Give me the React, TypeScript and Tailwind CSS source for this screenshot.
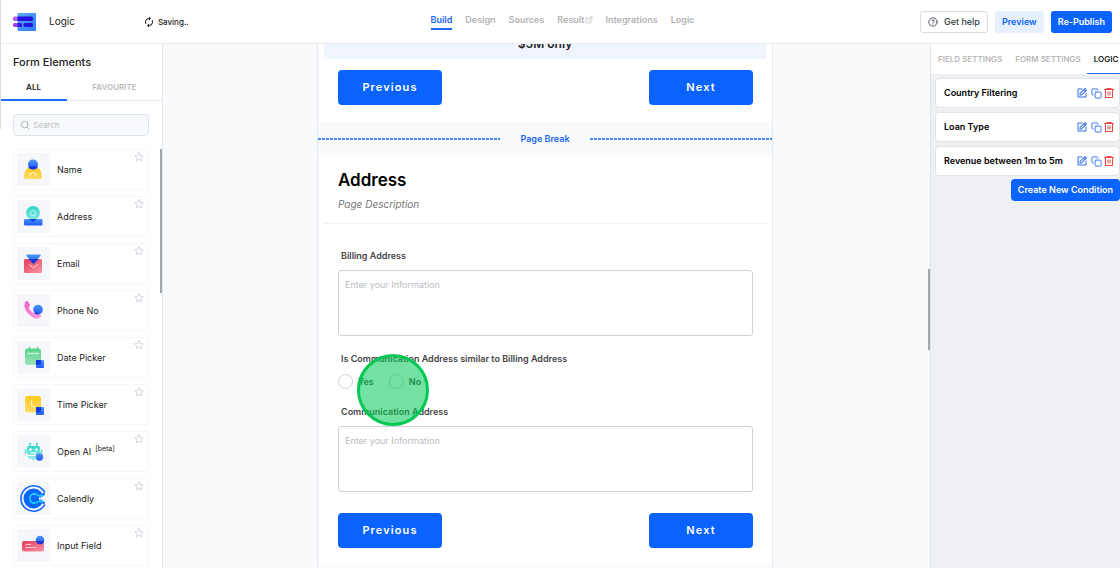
import React from 'react';
import { FiSearch, FiStar, FiCopy, FiExternalLink } from 'react-icons/fi';
import { BiEdit } from 'react-icons/bi';
import { MdAutorenew } from 'react-icons/md';
import { RiDeleteBin6Line } from 'react-icons/ri';
import { CircleHelp } from 'lucide-react';

const Logo = () => (
  <svg viewBox="0 0 23 18" className="h-[18px] w-[23px]" aria-hidden="true">
    <defs>
      <linearGradient id="logo-bg" x1="0" y1="0" x2="1" y2="1">
        <stop offset="0" stopColor="#5aaaf8" />
        <stop offset="1" stopColor="#2c7cfb" />
      </linearGradient>
    </defs>
    <rect y="3.500" width="9" height="4.500" rx="1.500" fill="#b65cf6" />
    <rect y="10" width="8" height="4" rx="1.500" fill="#a03cf2" />
    <rect x="4.500" width="18.500" height="18" rx="1" fill="url(#logo-bg)" />
    <path d="M4.500 3.500H18.500Q20 3.500 20 5V6.500Q20 8 18.500 8H4.500Z" fill="#2410dc" />
    <path d="M4.500 10H8Q9 10 9 11.500V12.500Q9 14 8 14H4.500Z" fill="#3a14dc" />
    <rect x="10.500" y="10" width="9.500" height="4" rx="1.500" fill="#1c14e0" />
  </svg>
);

const Gradients = () => (
  <svg className="absolute h-0 w-0" aria-hidden="true">
    <defs>
      <linearGradient id="blue" x1="0" y1="0" x2="0" y2="1">
        <stop offset="0" stopColor="#4a94f5" />
        <stop offset="1" stopColor="#1f5cf5" />
      </linearGradient>
      <linearGradient id="yellow" x1="0" y1="0" x2="0" y2="1">
        <stop offset="0" stopColor="#fdc81c" />
        <stop offset="1" stopColor="#fddb6b" />
      </linearGradient>
      <linearGradient id="teal" x1="0" y1="0" x2="0" y2="1">
        <stop offset="0" stopColor="#2ed6c6" />
        <stop offset="1" stopColor="#86e8e6" />
      </linearGradient>
      <linearGradient id="red" x1="0" y1="0" x2="1" y2="1">
        <stop offset="0" stopColor="#e23a58" />
        <stop offset="1" stopColor="#fb93a6" />
      </linearGradient>
      <linearGradient id="green" x1="0" y1="0" x2="0" y2="1">
        <stop offset="0" stopColor="#56d38a" />
        <stop offset="1" stopColor="#9be3ba" />
      </linearGradient>
      <linearGradient id="pink" x1="0" y1="0" x2="1" y2="1">
        <stop offset="0" stopColor="#ee62c8" />
        <stop offset="1" stopColor="#fb9ee0" />
      </linearGradient>
    </defs>
  </svg>
);

const NameIcon = () => (
  <>
    <path d="M7 24.500C7 17.500 10 13.500 16 13.500S25 17.500 25 24.500Q25 26 23.500 26H8.500Q7 26 7 24.500Z" fill="url(#yellow)" />
    <circle cx="16" cy="11.500" r="5" fill="url(#blue)" />
    <path d="M11.200 14Q16 12 20.800 14Q19.500 16.600 16 16.600T11.200 14Z" fill="#1737e0" />
    <path d="M13 23Q13.200 19.500 16 19.500T19 23" fill="none" stroke="#fff" strokeOpacity="0.8" />
  </>
);

const AddressIcon = () => (
  <>
    <circle cx="16" cy="13" r="7" fill="url(#teal)" />
    <circle cx="16" cy="13" r="2.500" fill="none" stroke="#c9f7f2" />
    <rect x="7" y="19" width="18.500" height="6.500" rx="1" fill="url(#blue)" />
    <path d="M12.500 19H19.500L16 22Z" fill="#1238e6" />
  </>
);

const EmailIcon = () => (
  <>
    <rect x="7" y="12" width="18" height="14" rx="1.500" fill="url(#red)" />
    <path d="M9.500 7.500H23.500V9L16.500 17L9.500 9Z" fill="url(#blue)" />
    <path d="M11.500 12H21.500L16.500 17Z" fill="#1b35d8" />
    <path d="M12.500 17.500L16.500 21L20.500 17.500" fill="none" stroke="#fff" strokeOpacity="0.75" />
  </>
);

const PhoneIcon = () => (
  <>
    <path d="M8 9.500Q7 8.500 8.500 7.500Q10.500 6.500 11.500 8L13 10.500Q13.500 12 12 13Q11.500 14 13 16Q15.500 19 17.500 19.500Q18.800 18 20 18.500L23.500 20.500Q24.800 21.500 23.500 23Q21.500 25.500 18 24.500Q9 20.500 7.300 12Z" fill="url(#pink)" />
    <circle cx="21" cy="15.500" r="4.800" fill="url(#blue)" />
    <path d="M17.300 19.300Q18.800 17.700 20.200 18.500L22.500 20Q19.500 20.800 17.300 19.300Z" fill="#173be0" />
  </>
);

const DateIcon = () => (
  <>
    <path d="M12.500 6V9M20.500 6V9" stroke="#56d38a" strokeWidth="1.200" strokeLinecap="round" />
    <rect x="8" y="7.500" width="16" height="16.500" rx="2.500" fill="url(#green)" />
    <path d="M10 12.500H22" stroke="#c4f0d6" strokeWidth="1.500" />
    <rect x="19" y="19" width="8" height="8" rx="1" fill="url(#blue)" />
    <path d="M19 19H24V21.500Q24 24 21.500 24H19Z" fill="#1238e6" />
  </>
);

const TimeIcon = () => (
  <>
    <rect x="8" y="8" width="16" height="16.500" rx="2.500" fill="url(#yellow)" />
    <path d="M14.500 12.500V17L18 19.500" fill="none" stroke="#fff2c0" strokeWidth="1.200" />
    <rect x="19" y="19" width="8" height="8" rx="1" fill="url(#blue)" />
    <path d="M19 19H24V22Q24 24.500 21.500 24.500H19Z" fill="#1238e6" />
  </>
);

const RobotIcon = () => (
  <>
    <path d="M13 12V9M20 12V9" stroke="#49dccb" strokeWidth="1.200" />
    <circle cx="13" cy="9" r="1.200" fill="#49dccb" />
    <circle cx="20" cy="9" r="1.200" fill="#49dccb" />
    <path d="M8.500 14.500V18.500M24.500 14.500V18.500" stroke="#49dccb" strokeWidth="1.500" />
    <rect x="10" y="11" width="13" height="9" rx="2" fill="url(#teal)" />
    <path d="M10.500 21H22V22.500Q20 24 18 24L16.500 25.500L15 24Q12 24 10.500 22Z" fill="#86e8e6" />
    <circle cx="13.500" cy="14.500" r="1.200" fill="#fff" />
    <circle cx="19.500" cy="14.500" r="1.200" fill="#fff" />
    <path d="M14 17.500Q16.500 18.800 19 17.500" fill="none" stroke="#fff" />
    <circle cx="22.500" cy="22" r="3.700" fill="url(#blue)" />
  </>
);

const CalendlyIcon = () => (
  <>
    <path d="M28.500 12A12.700 12.700 0 1 0 28.500 21" fill="none" stroke="#0a66ff" strokeWidth="1.600" />
    <circle cx="16.500" cy="16.500" r="10" fill="#0a66ff" />
    <path d="M30 9.500L22 13.500V19.500L30 23.500Z" fill="#f6f7fa" />
    <path d="M27.500 11.500L23.500 14.500C21.500 13.500 20.500 11.500 17 11.500A5.200 5.200 0 0 0 17 21.500C20.500 21.500 21.500 19.500 23.500 18.500L27.500 21.500" fill="none" stroke="#0a66ff" strokeWidth="2.200" />
    <path d="M26.500 13.500C22 15.500 21 11.800 16.800 11.800A4.800 4.800 0 0 0 16.800 21.200C21 21.200 22 17.500 26.500 19.500" fill="none" stroke="#22dcf2" strokeWidth="1.400" />
  </>
);

const InputIcon = () => (
  <>
    <rect x="5" y="12" width="22" height="10.500" rx="2" fill="url(#red)" />
    <path d="M8.500 15.500H14M8.500 18.500H19.500" stroke="#ffd3da" strokeWidth="0.900" />
    <circle cx="23" cy="11" r="4.300" fill="url(#blue)" />
    <path d="M18.900 12H26Q27 12.300 26.900 13Q25.800 15.300 23 15.300T18.900 12Z" fill="#2233d8" />
  </>
);

const elements = [
  { label: 'Name', icon: NameIcon },
  { label: 'Address', icon: AddressIcon },
  { label: 'Email', icon: EmailIcon },
  { label: 'Phone No', icon: PhoneIcon },
  { label: 'Date Picker', icon: DateIcon },
  { label: 'Time Picker', icon: TimeIcon },
  { label: 'Open AI', icon: RobotIcon, beta: true },
  { label: 'Calendly', icon: CalendlyIcon },
  { label: 'Input Field', icon: InputIcon },
];

const conditions = ['Country Filtering', 'Loan Type', 'Revenue between 1m to 5m'];

const Header = () => (
  <header className="flex h-11 shrink-0 items-center justify-between border-b border-[#e9ecf1] bg-white pr-2 pl-[13px]">
    <div className="flex flex-1 items-center">
      <Logo />
      <span className="ml-[13px] text-[10px] text-[#222]">Logic</span>
      <span className="ml-[68px] flex items-center gap-[3px] text-[8px] font-medium text-[#222]">
        <MdAutorenew className="h-3 w-3" />
        Saving..
      </span>
    </div>
    <nav className="flex items-start gap-[13px] text-[9px] leading-3 font-semibold text-[#b3b3b3]">
      <a href="#build" className="border-b-2 border-[#2166f3] pb-[2px] text-[#2166f3]">Build</a>
      <a href="#design">Design</a>
      <a href="#sources">Sources</a>
      <a href="#result" className="flex items-center">
        Result
        <FiExternalLink className="h-2 w-2" />
      </a>
      <a href="#integrations">Integrations</a>
      <a href="#logic">Logic</a>
    </nav>
    <div className="flex flex-1 items-center justify-end gap-[7px]">
      <button className="flex h-[22px] items-center gap-[6px] rounded-[3px] border border-[#d9dce1] px-[7px] text-[9px] font-medium text-[#333a45]">
        <CircleHelp className="h-[10px] w-[10px]" />
        Get help
      </button>
      <button className="h-[22px] rounded-[3px] bg-[#e6f0ff] px-[7px] text-[9px] font-semibold text-[#0b63ff]">Preview</button>
      <button className="h-[22px] rounded-[3px] bg-[#0b63ff] px-[7px] text-[9px] font-semibold text-white">Re-Publish</button>
    </div>
  </header>
);

const Sidebar = () => (
  <aside className="flex w-[163px] shrink-0 flex-col border-r border-[#e3e8ee] bg-white">
    <h2 className="px-[13px] pt-[10px] text-[11px] leading-4 font-medium text-[#222]">Form Elements</h2>
    <div className="mt-1 flex h-[27px] border-b border-[#e3e8ee] text-[8px] font-semibold">
      <button className="-mb-px w-[67px] border-b-2 border-[#1f6bff] text-[#222]">ALL</button>
      <button className="flex-1 text-[#bbb]">FAVOURITE</button>
    </div>
    <label className="mx-[13px] mt-[13px] flex h-[22px] shrink-0 items-center gap-[3px] rounded-sm border border-[#dde5ed] bg-[#f7f9fc] px-[6px]">
      <FiSearch className="h-[10px] w-[10px] shrink-0 text-[#a5abb5]" />
      <input type="text" aria-label="Search" placeholder="Search" className="w-full min-w-0 bg-transparent text-[8px] outline-none placeholder:text-[#bcc1c9]" />
    </label>
    <div className="mt-[13px] flex min-h-0 flex-1 justify-between overflow-hidden pl-[13px]">
      <ul className="flex w-[136px] flex-col gap-[6px]">
        {elements.map(({ label, icon: Icon, beta }) => (
          <li key={label} className="flex h-[41px] shrink-0 items-center rounded-sm border border-[#f5f6f8] pl-[3px]">
            <span className="bg-[#f6f7fa]">
              <svg viewBox="0 0 33 33" className="h-[33px] w-[33px]" aria-hidden="true">
                <Icon />
              </svg>
            </span>
            <span className="ml-[7px] flex-1 text-[9px] text-[#222]">
              {label}
              {beta && <sup className="ml-1 text-[7px]">[beta]</sup>}
            </span>
            <button aria-label={`Favourite ${label}`} className="mt-[2px] mr-1 self-start text-[#c9ced6]">
              <FiStar className="h-[10px] w-[10px]" />
            </button>
          </li>
        ))}
      </ul>
      <span className="h-36 w-[2px] bg-[#a3a6ab]" />
    </div>
  </aside>
);

const PageButtons = () => (
  <div className="flex justify-between pr-[19px] pl-5 text-[11px] font-semibold tracking-widest text-white">
    <button className="h-[35px] w-[104px] rounded-sm bg-[#0b63ff]">Previous</button>
    <button className="h-[35px] w-[104px] rounded-sm bg-[#0b63ff]">Next</button>
  </div>
);

const AddressField = ({ id, label }: { id: string; label: string }) => (
  <div className="flex flex-col pr-[19px] pl-5">
    <label htmlFor={id} className="px-[3px] text-[9px] leading-3 font-semibold text-[#444]">{label}</label>
    <textarea
      id={id}
      placeholder="Enter your Information"
      className="mt-2 h-[66px] resize-none rounded-[3px] border border-[#cfd1d6] px-[6px] py-2 text-[9px] leading-3 outline-none placeholder:text-[#b9bdc5]"
    />
  </div>
);

const Dashes = () => (
  <svg className="h-[2px] flex-1" aria-hidden="true">
    <line x1="0" y1="1" x2="100%" y2="1" stroke="#4a85fa" strokeWidth="2" strokeDasharray="3 1" />
  </svg>
);

const FormCanvas = () => (
  <main className="flex min-w-0 flex-1 justify-center overflow-hidden bg-[#f8fafc] pr-[3px]">
    <div className="w-[456px] shrink-0 border-x border-[#e6eaf0]">
      <section className="bg-white pb-[17px]">
        <div className="mx-[6px] flex h-[15px] items-end justify-center overflow-hidden bg-[#f0f4ff] pb-[7px] text-[12px] leading-4 font-semibold text-[#222]">
          $5M only
        </div>
        <div className="mt-[11px]">
          <PageButtons />
        </div>
      </section>
      <div className="flex h-[34px] items-center gap-5 text-[9px] font-semibold text-[#2166f3]">
        <Dashes />
        Page Break
        <Dashes />
      </div>
      <section className="bg-white pb-4">
        <div className="mx-[6px] border-b border-[#f0f1f3] px-[14px] pt-[13px] pb-[11px]">
          <h1 className="text-[17px] leading-[22px] font-semibold text-black">Address</h1>
          <p className="mt-[5px] text-[10px] leading-4 text-[#777] italic">Page Description</p>
        </div>
        <div className="flex flex-col gap-[17px] pt-[26px]">
          <AddressField id="billing" label="Billing Address" />
          <fieldset className="pr-[19px] pl-5">
            <legend className="px-[3px] text-[9px] leading-3 font-semibold text-[#444]">
              Is Communication Address similar to Billing Address
            </legend>
            <div className="mt-[9px] flex gap-[15px] text-[9px] font-semibold text-[#444]">
              <label className="flex items-center gap-[5px]">
                <input type="radio" name="same" className="h-[15px] w-[15px] appearance-none rounded-full border border-[#cfd1d6]" />
                Yes
              </label>
              <label className="flex items-center gap-[5px]">
                <input type="radio" name="same" className="h-[15px] w-[15px] appearance-none rounded-full border border-[#cfd1d6]" />
                No
              </label>
            </div>
          </fieldset>
          <AddressField id="communication" label="Communication Address" />
        </div>
        <div className="mt-[21px]">
          <PageButtons />
        </div>
      </section>
    </div>
  </main>
);

const LogicPanel = () => (
  <aside className="w-[190px] shrink-0 overflow-hidden border-l border-[#dfe3e9] bg-[#eff0f3]">
    <div className="flex h-[30px] bg-white text-[8px] font-semibold whitespace-nowrap text-[#b9b9b9]">
      <button className="px-[7px]">FIELD SETTINGS</button>
      <button className="px-[6px]">FORM SETTINGS</button>
      <button className="border-b border-[#1f6bff] px-[7px] text-[#222]">LOGIC</button>
    </div>
    <ul className="mt-1 flex flex-col gap-1 pl-1">
      {conditions.map((name) => (
        <li key={name} className="flex h-[30px] items-center rounded-sm border border-[#e1e3e8] bg-white pr-1 pl-2 text-[9px] font-semibold whitespace-nowrap text-black">
          <span className="flex-1">{name}</span>
          <button aria-label={`Edit ${name}`} className="text-[#2f6ff0]"><BiEdit className="h-3 w-3" /></button>
          <button aria-label={`Copy ${name}`} className="ml-[3px] text-[#2f6ff0]"><FiCopy className="h-[11px] w-[11px]" /></button>
          <button aria-label={`Delete ${name}`} className="ml-px text-[#ef4444]"><RiDeleteBin6Line className="h-3 w-3" /></button>
        </li>
      ))}
    </ul>
    <button className="mt-[3px] ml-auto block h-[22px] rounded-sm bg-[#0b63ff] px-[7px] text-[9px] font-semibold whitespace-nowrap text-white">
      Create New Condition
    </button>
  </aside>
);

const App: React.FC = () => (
  <div className="relative flex h-screen flex-col overflow-hidden bg-white font-['Inter',sans-serif]">
    <Gradients />
    <Header />
    <div className="flex min-h-0 flex-1">
      <Sidebar />
      <div className="relative flex min-w-0 flex-1">
        <FormCanvas />
        <span className="absolute top-[225px] right-0 h-[81px] w-[2px] bg-[#a3a6ab]" />
        <span className="absolute top-[310px] left-[calc(50%-190px)] h-[72px] w-[72px] rounded-full border-[3px] border-[#00c853] bg-[#00c853]/55" />
      </div>
      <LogicPanel />
    </div>
    <span className="absolute top-0 left-0 h-[129px] w-px bg-[#dcdcdc]" />
  </div>
);

export default App;
